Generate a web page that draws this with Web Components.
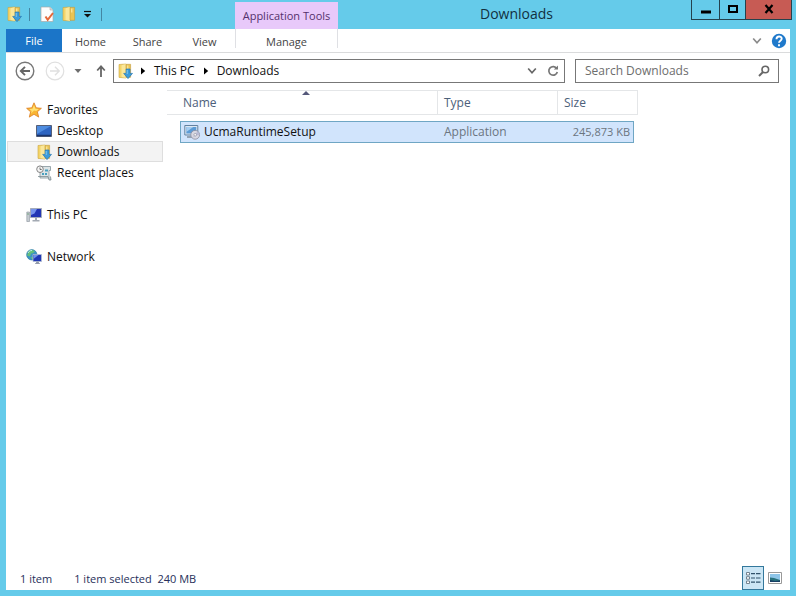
<!DOCTYPE html>
<html lang="en">
<head>
<meta charset="utf-8">
<title>Downloads</title>
<style>
  html, body { margin: 0; height: 100%; }
  body { font: 12px/20px "Open Sans", "Noto Sans", sans-serif; color: #111; background: #65cbea; }
</style>
</head>
<body>
<explorer-window>
  <title-bar slot="title" heading="Downloads"></title-bar>
  <ribbon-tabs slot="ribbon"></ribbon-tabs>
  <address-row slot="address"></address-row>
  <nav-pane slot="nav">
    <nav-group>
      <nav-item icon="star">Favorites</nav-item>
      <nav-item icon="desktop" child>Desktop</nav-item>
      <nav-item icon="downloads" child current>Downloads</nav-item>
      <nav-item icon="recent" child>Recent places</nav-item>
    </nav-group>
    <nav-group><nav-item icon="pc">This PC</nav-item></nav-group>
    <nav-group><nav-item icon="network">Network</nav-item></nav-group>
  </nav-pane>
  <file-list slot="files"></file-list>
  <status-bar slot="status"><span>1 item</span><span>1 item selected&nbsp; 240 MB</span></status-bar>
</explorer-window>

<script>
const folder = `<path d="M2 1.5 9 1v14l-7-.6z" fill="#f4d469" stroke="#c9a441" stroke-width=".6"/><path d="M4.5 2.2 9 1v14l-4.5-1z" fill="#fae79b"/><path d="M9 1.3h4.6v13H9z" fill="#eac453" stroke="#c29a3c" stroke-width=".6"/><path d="M10.8 2.5v4" stroke="#fff1b5"/>`;
const ICONS = {
  folder: [16, 16, folder],
  downloads: [16, 16, folder + `<path d="M9.2 6h3.800v4.400H15.500L11 15.600 6.700 10.400h2.500z" fill="#3c9cdb" stroke="#2578b5" stroke-width=".7"/><path d="M10.200 7v4" stroke="#83caef"/>`],
  props: [16, 16, `<path d="M2 1h9l3 3v11.5H2z" fill="#fdfdfd" stroke="#a9a9a9" stroke-width=".7"/><path d="M11 1v3h3" fill="#ddd" stroke="#a9a9a9" stroke-width=".6"/><path d="m6.5 10.5 2.2 3.3L14 7" fill="none" stroke="#e5683a" stroke-width="2"/>`],
  menu: [9, 8, `<path d="M1 1.5h7" stroke="#111" stroke-width="1.2"/><path d="M1 4h7L4.500 7.500z" fill="#111"/>`],
  min: [12, 12, `<path d="M1 9h10" stroke="#000" stroke-width="3"/>`],
  max: [12, 12, `<path d="M2 3h8v6H2z" fill="none" stroke="#000" stroke-width="2"/>`],
  close: [12, 12, `<path d="m2.500 2 7 8M9.500 2l-7 8" stroke="#000" stroke-width="2.200"/>`],
  chevron: [10, 8, `<path d="m1.200 1.500 3.800 4.200 3.800-4.200" fill="none" stroke="currentColor" stroke-width="1.700"/>`],
  help: [16, 16, `<circle cx="8" cy="8" r="7.200" fill="#1f79cb"/><path d="M5.500 6.200c0-3.600 5.200-3.400 5.200-.5C10.700 7.600 8 7.700 8 9.800M8 11.200v2" fill="none" stroke="#fff" stroke-width="1.900"/>`],
  back: [20, 20, `<circle cx="10" cy="10" r="8.800" fill="none" stroke="#777" stroke-width="1.400"/><path d="M15 10H6M10 5.800 5.800 10l4.200 4.200" fill="none" stroke="#666" stroke-width="1.900"/>`],
  fwd: [20, 20, `<circle cx="10" cy="10" r="8.800" fill="none" stroke="#e0e0e0" stroke-width="1.200"/><path d="M5 10h9M10 5.800l4.200 4.200-4.200 4.200" fill="none" stroke="#e0e0e0" stroke-width="1.400"/>`],
  drop: [8, 6, `<path d="M.5 1h7L4 5z" fill="#6e6e6e"/>`],
  up: [10, 14, `<path d="M5 13V3M1.200 6.500 5 2.300l3.800 4.200" fill="none" stroke="#666" stroke-width="1.800"/>`],
  crumb: [6, 8, `<path d="M1 .5v7L5.200 4z" fill="#000"/>`],
  refresh: [12, 12, `<path d="M9.800 3.600A4.300 4.300 0 1 0 10.300 7" fill="none" stroke="#777" stroke-width="1.700"/><path d="M6.800 4.500H11V.5z" fill="#777"/>`],
  search: [12, 12, `<circle cx="7.300" cy="4.500" r="3.300" fill="none" stroke="#666" stroke-width="1.600"/><path d="M5 7 1 11" stroke="#666" stroke-width="2"/>`],
  star: [16, 16, `<path d="m8 .8 2.200 5 5.200.5-4 3.500 1.300 5.300L8 12.300l-4.700 2.800 1.300-5.300-4-3.500 5.200-.5z" fill="#f9b532" stroke="#dc7f25" stroke-width=".8"/><path d="m8 3 1.400 3.800 3.400.3-2.600 2L8 8.500l-3 3 .7-2.500-2.600-2 3.500-.3z" fill="#ffe173"/>`],
  desktop: [16, 16, `<path d="M.5 2.500h15v11H.5z" fill="#2e65c2" stroke="#555f77"/><path d="M1 3h14L1 11z" fill="#4f8de0"/><path d="M1 12.500h14" stroke="#1a356e" stroke-width="1.500"/>`],
  recent: [16, 16, `<path d="M4 1.500h10.500v4H13V13H4z" fill="#dce4e6" stroke="#84949a" stroke-width=".8"/><path d="M2 11.500h10l1 3.500h2l-.5-3.500" fill="#c3cfd3" stroke="#7c8b90" stroke-width=".8"/><path d="M6 8h2v2H6zM9 8h2v2H9zM9 4.500h3v2H9z" fill="#4aa0be"/><circle cx="4" cy="4.200" r="3.300" fill="#f5f5f5" stroke="#858585"/><path d="M4 2.500v2h1.700" fill="none" stroke="#555" stroke-width=".8"/>`],
  pc: [16, 16, `<path d="M.8 5h2.700v9.500H.8z" fill="#c5cbd1" stroke="#89929b" stroke-width=".6"/><path d="M4.500 1.500h11v9h-11z" fill="#2336b4" stroke="#a4abba"/><path d="M5 2h6L8.500 6.500 5 8z" fill="#7795ed"/><path d="M9 11h2v2H9zM6.500 13h7v1.500h-7z" fill="#a3aab3"/><path d="M1.300 7h1.500" stroke="#5d9b68"/>`],
  network: [16, 16, `<circle cx="5.800" cy="5.800" r="5.200" fill="#3b93c5" stroke="#297ba1" stroke-width=".6"/><path d="M2.500 2.200 6 .8l3 1.500-2 2-2 .3-1 3-3-1zM4.500 8l3 .5-1 2.400z" fill="#63bf7c"/><path d="M2 4c1-2 2.500-2.500 4-2.500" fill="none" stroke="#c4efe1"/><path d="M7 5.500h8.500v7H7z" fill="#2038b5" stroke="#b2bdd1" stroke-width=".8"/><path d="M7.500 6h5L7.500 10z" fill="#6d91e8"/><path d="M10.500 13h2v1.500h-2zM9 14.500h5" fill="#8f98a8" stroke="#8f98a8" stroke-width=".8"/>`],
  setup: [16, 16, `<path d="M.8 1.500h13v9.500H.8z" fill="#dce7f3" stroke="#62819f"/><path d="M2.300 3h10v6.500h-10z" fill="#5c9bd5"/><path d="M2.300 3h7l-7 5z" fill="#a5cdf0"/><path d="M3 13h5" stroke="#7e8e9d" stroke-width="1.500"/><circle cx="11.200" cy="10.800" r="4.400" fill="#d8d8e2" stroke="#8c8e9f" stroke-width=".8"/><path d="m8.500 14 2-3 3-3.500a4.400 4.400 0 0 1 2 3.500l-4 .5z" fill="#b9bbd5"/><circle cx="11.200" cy="10.800" r="1.300" fill="#fff" stroke="#8c8e9f" stroke-width=".7"/>`],
  sort: [8, 4, `<path d="M0 4h8L4 0z" fill="#55587a"/>`],
  details: [16, 14, `<path d="M1.500 1.500h3v2.500h-3zM1.500 5.700h3v2.500h-3zM1.500 10h3v2.500h-3z" fill="#fff" stroke="#667785" stroke-width=".9"/><path d="M6 2.700h4M11 2.700h4.500M6 7h4M11 7h4.500M6 11.200h4M11 11.200h4.500" stroke="#31536c" stroke-width="1.200"/>`],
  thumbs: [14, 12, `<path d="M.5.5h13v11H.5z" fill="#fff" stroke="#999"/><path d="M2 2h10v8H2z" fill="#8ec5e8"/><path d="M2 5.500 6 6l6 2v2H2z" fill="#28717c"/><path d="M2 8l5 1 5-.5V10H2z" fill="#173e63"/>`]
};

function define(name, html, setup) {
  const t = document.createElement('template');
  t.innerHTML = html;
  customElements.define(name, class extends HTMLElement {
    constructor() {
      super();
      this.attachShadow({ mode: 'open' }).append(t.content.cloneNode(true));
    }
    connectedCallback() { if (setup) setup(this, this.shadowRoot); }
  });
}

const BTN = `button{font:inherit;color:inherit;background:none;border:0;padding:0;margin:0;display:flex;align-items:center;justify-content:center}*{box-sizing:border-box}`;

define('ui-icon', `<style>:host{display:block;flex:none}svg{display:block}</style>`, (el, root) => {
  const [w, h, body] = ICONS[el.getAttribute('name')];
  root.innerHTML += `<svg width="${w}" height="${h}" viewBox="0 0 ${w} ${h}" aria-hidden="true">${body}</svg>`;
});

define('explorer-window', `<style>
  :host{display:flex;flex-direction:column;min-height:100vh;box-sizing:border-box;padding:0 6px 6px}
  .client{flex:1;display:flex;flex-direction:column;background:#fff}
  .panes{flex:1;display:grid;grid-template-columns:157px 1fr;column-gap:4px}
</style>
<slot name="title"></slot>
<div class="client"><slot name="ribbon"></slot><slot name="address"></slot>
<div class="panes"><slot name="nav"></slot><slot name="files"></slot></div>
<slot name="status"></slot></div>`);

define('title-bar', `<style>${BTN}
  :host{display:grid;grid-template-columns:229px 103px 1fr auto;height:29px}
  .quick{display:flex;align-items:center;gap:6px;height:28px}
  .quick i{width:1px;height:13px;background:#4386a3}
  .quick i:first-of-type{margin:0 3px 0 1px}
  .quick i:last-of-type{margin-left:3px}
  .context{align-self:end;height:27px;background:#e8c9fa;color:#54316c;font-size:11px;line-height:28px;text-align:center;white-space:nowrap}
  h1{margin:0;padding-left:4px;font-size:14px;font-weight:400;line-height:28px;text-align:center;color:#12303f}
  .caption{display:grid;grid-template-columns:27px 26px 46px;height:20px;margin-right:-2px;border:1px solid #24424e;border-top:0}
  .caption button+button{border-left:1px solid #24424e}
  .caption .close{background:#c75b54}
  .caption button{padding-bottom:1px}
</style>
<div class="quick"><ui-icon name="downloads"></ui-icon><i></i>
<button aria-label="Properties"><ui-icon name="props"></ui-icon></button>
<button aria-label="New folder"><ui-icon name="folder"></ui-icon></button>
<button aria-label="Customize toolbar"><ui-icon name="menu"></ui-icon></button><i></i></div>
<div class="context">Application Tools</div>
<h1></h1>
<div class="caption"><button aria-label="Minimize"><ui-icon name="min"></ui-icon></button><button aria-label="Maximize"><ui-icon name="max"></ui-icon></button><button class="close" aria-label="Close"><ui-icon name="close"></ui-icon></button></div>`,
(el, root) => { root.querySelector('h1').textContent = el.getAttribute('heading'); });

define('ribbon-tabs', `<style>${BTN}
  :host{display:flex;height:24px;box-sizing:border-box;border-bottom:1px solid #dadbdc;font-size:11px;color:#444}
  button{height:23px;width:57px;padding-top:2px}
  .file{width:56px;background:#1b75c8;color:#fff;padding-top:0}
  .manage{width:103px;height:19px;margin-left:2px;padding-top:6px;border:solid #dfe0e4;border-width:0 1px}
  .tools{margin-left:auto;display:flex;align-items:center;gap:9px;padding-right:3px;color:#8a8a8a}
  .tools button{width:auto;padding:0}
</style>
<button class="file">File</button><button>Home</button><button>Share</button><button>View</button><button class="manage">Manage</button>
<div class="tools"><button aria-label="Minimize the ribbon"><ui-icon name="chevron"></ui-icon></button><button aria-label="Help"><ui-icon name="help"></ui-icon></button></div>`);

define('address-row', `<style>${BTN}
  :host{display:grid;grid-template-columns:auto 1fr 204px;gap:10px;align-items:center;height:36px;padding:0 11px 0 9px}
  .nav{display:grid;grid-template-columns:30px 29px 22px 11px;align-items:center;justify-items:start;margin-right:-4px}
  .path,.search{display:flex;align-items:center;height:24px;border:1px solid #777}
  .path{padding:0 6px 0 3px;gap:8px}
  .path ui-icon:first-child{margin-right:-1px}
  .path .end{margin-left:auto;display:flex;gap:11px;color:#666}
  .search{padding-right:8px}
  input{flex:1;min-width:0;border:0;outline:0;padding:0 9px;font:inherit;background:none}
  input::placeholder{color:#6d6d6d;opacity:1}
</style>
<div class="nav"><button aria-label="Back"><ui-icon name="back"></ui-icon></button><button aria-label="Forward" disabled><ui-icon name="fwd"></ui-icon></button><button aria-label="Recent locations"><ui-icon name="drop"></ui-icon></button><button aria-label="Up"><ui-icon name="up"></ui-icon></button></div>
<div class="path"><ui-icon name="downloads"></ui-icon><ui-icon name="crumb"></ui-icon><button>This PC</button><ui-icon name="crumb"></ui-icon><button>Downloads</button>
<div class="end"><button aria-label="Previous locations"><ui-icon name="chevron"></ui-icon></button><button aria-label="Refresh"><ui-icon name="refresh"></ui-icon></button></div></div>
<div class="search"><input type="text" aria-label="Search Downloads" placeholder="Search Downloads"><button aria-label="Search"><ui-icon name="search"></ui-icon></button></div>`);

define('nav-pane', `<style>:host{display:block;padding-top:10px}nav{display:flex;flex-direction:column;gap:21px}</style><nav aria-label="Folders"><slot></slot></nav>`);
define('nav-group', `<style>:host{display:block}</style><slot></slot>`);
define('nav-item', `<style>
  :host{display:block;padding-left:1px}
  a{display:flex;align-items:center;gap:5px;height:21px;box-sizing:border-box;padding-left:18px;border:1px solid transparent;color:inherit;text-decoration:none}
  :host([child]) a{padding-left:28px}
  :host([current]) a{background:#f3f3f3;border-color:#dedede}
</style><a href="#"><slot></slot></a>`, (el, root) => {
  const icon = document.createElement('ui-icon');
  icon.setAttribute('name', el.getAttribute('icon'));
  root.querySelector('a').prepend(icon);
});

define('file-list', `<style>${BTN}
  :host{display:block;padding-top:1px}
  table{display:block;width:471px;max-width:100%}
  thead,tbody{display:block}
  tr{display:grid;grid-template-columns:1fr 120px 80px}
  thead tr{border:1px solid #e4e6e8;border-left:0;height:25px;color:#4c607a}
  th{font-weight:400;padding:0;text-align:left;position:relative}
  th+th{border-left:1px solid #e4e6e8}
  th button{width:100%;height:23px;justify-content:flex-start;padding-left:6px}
  th:first-child button{padding-left:16px}
  th ui-icon{position:absolute;top:0;left:50%}
  tbody tr{margin:6px 4px 0 13px;height:22px;border:1px solid #6fa6c4;background:#d1e4fc;grid-template-columns:1fr 120px 75px}
  td{display:flex;align-items:center;padding:0;color:#6b7580;padding-left:6px}
  td:first-child{color:#111;gap:4px;padding-left:3px}
  td:last-child{justify-content:flex-end;padding:0 3px 0 0;font-size:11px}
</style>
<table><thead><tr><th aria-sort="ascending"><button>Name</button><ui-icon name="sort"></ui-icon></th><th><button>Type</button></th><th><button>Size</button></th></tr></thead>
<tbody><tr aria-selected="true"><td><ui-icon name="setup"></ui-icon>UcmaRuntimeSetup</td><td>Application</td><td>245,873 KB</td></tr></tbody></table>`);

define('status-bar', `<style>${BTN}
  :host{display:flex;align-items:center;justify-content:space-between;height:24px;padding:0 4px 0 14px;color:#28305a;font-size:11px}
  .text{display:flex;gap:22px;padding-top:2px}
  .views{display:flex}
  .views button{width:22px;height:24px;border:1px solid transparent}
  .views button[aria-pressed=true]{background:#cbe6f5;border-color:#33789c}
</style><div class="text"><slot></slot></div>
<div class="views"><button aria-label="Details view" aria-pressed="true"><ui-icon name="details"></ui-icon></button><button aria-label="Thumbnail view" aria-pressed="false"><ui-icon name="thumbs"></ui-icon></button></div>`);
</script>
</body>
</html>
